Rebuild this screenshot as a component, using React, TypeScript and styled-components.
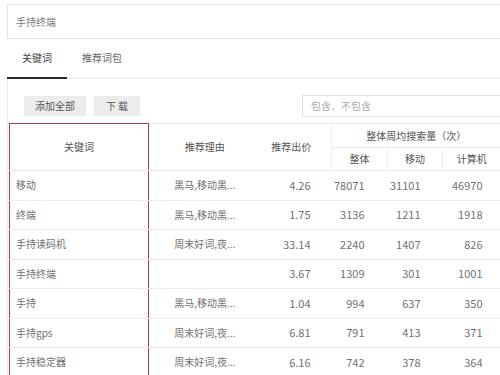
import React from "react";
import styled, { createGlobalStyle } from "styled-components";

const GlobalStyle = createGlobalStyle`
  html, body {
    margin: 0;
    padding: 0;
    background: #fff;
    overflow: hidden;
  }
  body {
    font-family: "Noto Sans CJK SC", "Liberation Sans", sans-serif;
    color: #666;
    line-height: 1.2;
  }
`;

const Page = styled.div`
  width: 500px;
  height: 375px;
  overflow: hidden;
  padding: 4px 0 0 7px;
  box-sizing: border-box;
`;

const KeywordBox = styled.div`
  height: 35px;
  margin-right: -20px;
  border: 1px solid #e2e2e2;
  box-sizing: border-box;
  display: flex;
  align-items: center;
  padding-left: 8px;
  font-size: 10px;
  color: #7a7a7a;
`;

const TabBar = styled.div`
  display: flex;
  height: 39px;
  margin-right: -20px;
  border-bottom: 1px solid #e6e6e6;
`;

const Tab = styled.div<{ $active?: boolean; $w: number }>`
  width: ${(p) => p.$w}px;
  display: flex;
  align-items: center;
  justify-content: center;
  font-size: 10px;
  color: ${(p) => (p.$active ? "#444" : "#666")};
  box-sizing: border-box;
  border-bottom: 2px solid ${(p) => (p.$active ? "#2b2b2b" : "transparent")};
  margin-bottom: -1px;
  padding-bottom: 1px;
`;

const Panel = styled.div`
  border-left: 1px solid #efefef;
  margin-right: -20px;
  height: 320px;
`;

const Toolbar = styled.div`
  display: flex;
  align-items: center;
  padding: 16px 0 0 16px;
  height: 38px;
  box-sizing: border-box;
`;

const Button = styled.div<{ $w: number }>`
  width: ${(p) => p.$w}px;
  height: 20px;
  background: #ececec;
  color: #555;
  font-size: 10px;
  display: flex;
  align-items: center;
  justify-content: center;
  margin-right: 8px;
`;

const Filter = styled.div`
  margin-left: 154px;
  flex: 1;
  height: 22px;
  border: 1px solid #e0e0e0;
  box-sizing: border-box;
  display: flex;
  align-items: center;
  padding-left: 8px;
  font-size: 10px;
  color: #aaa;
`;

const Table = styled.table`
  margin: 6px 0 0 1px;
  border-collapse: collapse;
  table-layout: fixed;
  width: 511px;
  font-size: 10px;
`;

const HeadRow = styled.tr<{ $h: number }>`
  height: ${(p) => p.$h}px;
`;

const Th = styled.th<{ $key?: boolean; $pr?: number; $noLeft?: boolean }>`
  font-weight: normal;
  color: #555;
  text-align: center;
  padding: 0 ${(p) => p.$pr ?? 0}px 0 0;
  border-top: 1px solid #ececec;
  border-bottom: 1px solid #ececec;
  border-left: ${(p) => (p.$noLeft ? "none" : "1px solid #ececec")};
  ${(p) =>
    p.$key &&
    `
    border: 1.5px solid #a43e58;
    border-bottom: 1px solid #ececec;
  `}
`;

const Td = styled.td<{ $num?: boolean; $pr?: number; $key?: boolean }>`
  height: 28.5px;
  padding: 0 ${(p) => p.$pr ?? 0}px 0 ${(p) => (p.$key ? 6 : 0)}px;
  text-align: ${(p) => (p.$num ? "right" : p.$key ? "left" : "center")};
  font-size: ${(p) => (p.$num ? 11 : 10)}px;
  color: #717171;
  border-bottom: 1px solid #eeeeee;
  white-space: nowrap;
  overflow: hidden;
  ${(p) =>
    p.$key &&
    `
    border-left: 1.5px solid #a43e58;
    border-right: 1.5px solid #a43e58;
  `}
`;

const rows = [
  ["移动", "黑马,移动黑...", "4.26", "78071", "31101", "46970"],
  ["终端", "黑马,移动黑...", "1.75", "3136", "1211", "1918"],
  ["手持读码机", "周末好词,夜...", "33.14", "2240", "1407", "826"],
  ["手持终端", "", "3.67", "1309", "301", "1001"],
  ["手持", "黑马,移动黑...", "1.04", "994", "637", "350"],
  ["手持gps", "周末好词,夜...", "6.81", "791", "413", "371"],
  ["手持稳定器", "周末好词,夜...", "6.16", "742", "378", "364"],
];

export default function App() {
  return (
    <Page>
      <GlobalStyle />
      <KeywordBox>手持终端</KeywordBox>
      <TabBar>
        <Tab $active $w={60}>关键词</Tab>
        <Tab $w={70}>推荐词包</Tab>
      </TabBar>
      <Panel>
        <Toolbar>
          <Button $w={62}>添加全部</Button>
          <Button $w={46}>下 载</Button>
          <Filter>包含、不包含</Filter>
        </Toolbar>
        <Table>
          <colgroup>
            <col style={{ width: 139 }} />
            <col style={{ width: 112 }} />
            <col style={{ width: 71 }} />
            <col style={{ width: 56 }} />
            <col style={{ width: 55 }} />
            <col style={{ width: 78 }} />
          </colgroup>
          <thead>
            <HeadRow $h={24}>
              <Th rowSpan={2} $key>关键词</Th>
              <Th rowSpan={2} $noLeft>推荐理由</Th>
              <Th rowSpan={2} $pr={9} $noLeft>推荐出价</Th>
              <Th colSpan={3} $pr={20}>整体周均搜索量（次）</Th>
            </HeadRow>
            <HeadRow $h={23}>
              <Th>整体</Th>
              <Th>移动</Th>
              <Th $pr={20}>计算机</Th>
            </HeadRow>
          </thead>
          <tbody>
            {rows.map((r) => (
              <tr key={r[0]}>
                <Td $key>{r[0]}</Td>
                <Td>{r[1]}</Td>
                <Td $num $pr={21}>{r[2]}</Td>
                <Td $num $pr={23}>{r[3]}</Td>
                <Td $num $pr={22}>{r[4]}</Td>
                <Td $num $pr={38}>{r[5]}</Td>
              </tr>
            ))}
          </tbody>
        </Table>
      </Panel>
    </Page>
  );
}
